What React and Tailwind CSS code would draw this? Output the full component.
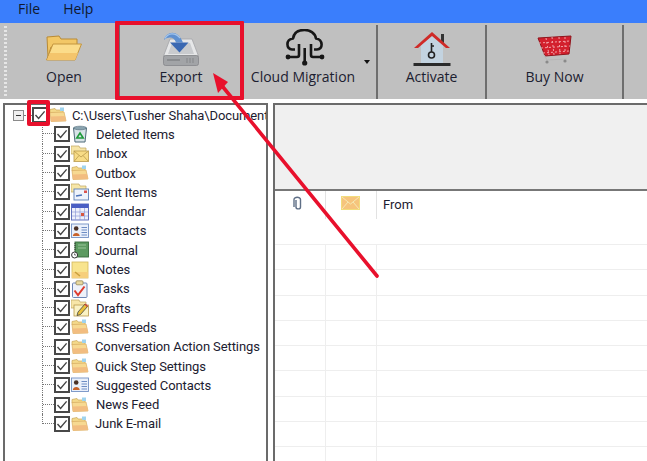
const F = { fontFamily: '"Open Sans", "Liberation Sans", sans-serif' };
const T = { fontFamily: 'Roboto, "Liberation Sans", sans-serif' };

function FolderBase() {
  return (
    <>
      <path d="M1 5 L1 3.5 L6 2.5 L7 4 L14 4 L14 7 L1 7 Z" fill="#f4d98a" stroke="#c9a85a" strokeWidth="0.7" />
      <path d="M11 1.5 L15 1.5 L15 5 L11 5 Z" fill="#9fd3ee" />
      <path d="M1 6.5 L15 6 L17 15 L2 15.5 Z" fill="#f7d991" stroke="#d9ae62" strokeWidth="0.7" />
      <path d="M1.5 10.5 L16 10 L17 15 L2 15.5 Z" fill="#f2bd80" />
    </>
  );
}

function Mini({ kind }) {
  return (
    <svg width="18" height="18" viewBox="0 0 18 18" className="shrink-0">
      {kind === "folder" && <FolderBase />}
      {kind === "trash" && (
        <>
          <path d="M2.5 3 L15.5 3 L14 17 L4 17 Z" fill="#d9e3e8" stroke="#4f6a78" strokeWidth="1" />
          <ellipse cx="9" cy="3" rx="6.5" ry="1.8" fill="#8aa4b0" stroke="#4f6a78" strokeWidth="0.6" />
          <path d="M9 8 L12.2 13 L5.8 13 Z" fill="none" stroke="#1f9a3a" strokeWidth="1.6" />
        </>
      )}
      {kind === "inbox" && (
        <>
          <path d="M0 1 L8 1 L9 3 L15 3 L15 9 L0 9 Z" fill="#f7e6a8" stroke="#bda35e" strokeWidth="0.7" />
          <rect x="3" y="6" width="14.5" height="10.5" fill="#f8dc86" stroke="#b99a4c" strokeWidth="0.8" />
          <path d="M3 6 L10 12 L17.5 6 M3 16.5 L8 10.5 M17.5 16.5 L12 10.5" fill="none" stroke="#b99a4c" strokeWidth="0.8" />
        </>
      )}
      {kind === "sent" && (
        <>
          <path d="M0 1 L8 1 L9 3 L15 3 L15 9 L0 9 Z" fill="#f7e6a8" stroke="#bda35e" strokeWidth="0.7" />
          <rect x="3" y="6" width="14.5" height="11" fill="#eef3fb" stroke="#5c7fb5" strokeWidth="0.9" />
          <path d="M5 13 L11 12" stroke="#4a72b8" strokeWidth="1.4" />
          <rect x="13" y="7.5" width="3" height="2.5" fill="#d9534f" />
        </>
      )}
      {kind === "calendar" && (
        <>
          <rect x="0.5" y="1" width="17" height="16" fill="#eef0fb" stroke="#5363b8" strokeWidth="0.9" />
          <rect x="0.5" y="1" width="17" height="4" fill="#4a5ec4" />
          <path d="M4.5 5 V17 M9 5 V17 M13.5 5 V17 M1 9 H17 M1 13 H17" stroke="#8f9bd8" strokeWidth="0.7" />
          <rect x="10" y="10" width="3" height="3" fill="#d8553f" />
        </>
      )}
      {kind === "contacts" && (
        <>
          <rect x="0.5" y="2" width="17" height="13.5" fill="#eaf0fb" stroke="#7390c4" strokeWidth="0.9" />
          <circle cx="5.2" cy="6.5" r="2.3" fill="#4b3228" />
          <path d="M1.8 14 C2 10 8.5 10 8.7 14 Z" fill="#c8622b" />
          <path d="M10.5 5.5 H16 M10.5 8 H16 M10.5 10.5 H16 M10.5 13 H16" stroke="#6d8cc4" strokeWidth="1" />
        </>
      )}
      {kind === "journal" && (
        <>
          <rect x="4" y="1" width="13.5" height="15" fill="#5c9a60" stroke="#35693a" strokeWidth="0.9" />
          <path d="M7 4 H15 M7 7 H15" stroke="#a9d0a8" strokeWidth="0.8" />
          <circle cx="3.6" cy="14" r="3" fill="#fff" stroke="#333" strokeWidth="1" />
          <path d="M3.6 12.5 V14 H5" stroke="#333" strokeWidth="0.7" fill="none" />
          <path d="M4 2 V10" stroke="#333" strokeWidth="1" strokeDasharray="1 1" />
        </>
      )}
      {kind === "notes" && (
        <>
          <rect x="1" y="1" width="16" height="16" fill="#f8e48e" stroke="#d2b75c" strokeWidth="0.8" />
          <path d="M1 11 L17 11 L17 17 L1 17 Z" fill="#f6cf7c" />
          <path d="M4 11 L9 15" stroke="#c9a03c" strokeWidth="1.6" />
        </>
      )}
      {kind === "tasks" && (
        <>
          <rect x="1.5" y="3" width="14.5" height="14.5" rx="1" fill="#eef2fa" stroke="#6d87b6" strokeWidth="1" />
          <rect x="5" y="0.8" width="7" height="4" rx="1" fill="#e8d9a0" stroke="#8d7d4a" strokeWidth="0.7" />
          <path d="M3.5 10.5 L7 15 L13.5 6.5" fill="none" stroke="#de3b2e" strokeWidth="2" />
        </>
      )}
      {kind === "drafts" && (
        <>
          <path d="M0 1 L8 1 L9 3 L15 3 L15 9 L0 9 Z" fill="#f7e6a8" stroke="#bda35e" strokeWidth="0.7" />
          <rect x="3" y="6" width="14.5" height="11" fill="#faf2c4" stroke="#b99a4c" strokeWidth="0.8" />
          <path d="M6 16.5 L7 13 L14 5 L16.5 7.5 L9.5 15.5 Z" fill="#e9c13c" stroke="#444" strokeWidth="0.8" />
          <path d="M14 5 L16.5 7.5" stroke="#c8413a" strokeWidth="1.6" />
        </>
      )}
    </svg>
  );
}

function Check() {
  return (
    <span className="flex h-[16px] w-[16px] shrink-0 items-center justify-center border-2 border-[#484848] bg-white">
      <svg width="12" height="12" viewBox="0 0 12 12">
        <path d="M1.5 6 L4.6 9.4 L10.6 2.4" fill="none" stroke="#444" strokeWidth="1.4" />
      </svg>
    </span>
  );
}

const items = [
  ["Deleted Items", "trash", 7],
  ["Inbox", "inbox", 7],
  ["Outbox", "folder", 6],
  ["Sent Items", "sent", 7],
  ["Calendar", "calendar", 6],
  ["Contacts", "contacts", 6],
  ["Journal", "journal", 6],
  ["Notes", "notes", 7],
  ["Tasks", "tasks", 7],
  ["Drafts", "drafts", 7],
  ["RSS Feeds", "folder", 7],
  ["Conversation Action Settings", "folder", 6],
  ["Quick Step Settings", "folder", 6],
  ["Suggested Contacts", "contacts", 7],
  ["News Feed", "folder", 7],
  ["Junk E-mail", "folder", 6],
];

function Sep() {
  return <div className="mt-[2px] w-[2px] shrink-0 bg-[#6e6e6e]" />;
}

function Tool({ w, label, children, caret }) {
  return (
    <div className={`relative flex h-full shrink-0 flex-col items-center ${w}`}>
      <div className="flex h-[44px] items-end justify-center">{children}</div>
      <span className={`text-[14px] leading-[20px] text-[#1c2030] ${caret ? "-ml-[14px]" : ""}`}>{label}</span>
      {caret && <span className="absolute right-[6px] top-[37px] h-0 w-0 border-x-[3px] border-t-[4px] border-x-transparent border-t-[#111]" />}
    </div>
  );
}

const rowLines = [0, 1, 2, 3, 4, 5, 6, 7, 8];

export default function App() {
  return (
    <div className="relative h-[461px] w-[647px] overflow-hidden bg-white" style={F}>
      <div className="flex h-[23px] items-start gap-[23px] bg-[#3a7efc] pl-[18px] text-[14px] leading-[17px] text-[#10192e]">
        <span>File</span>
        <span>Help</span>
      </div>

      <div className="flex h-[76px] bg-[#c0c0c0]">
        <div className="flex w-[10px] shrink-0 flex-col gap-[2px] pl-[4px] pt-[3px]">
          {Array.from({ length: 18 }, (_, i) => (
            <span key={i} className="h-[2px] w-[3px] bg-[#e6e6e6]" />
          ))}
        </div>
        <Tool w="w-[108px]" label="Open">
          <svg width="38" height="30" viewBox="0 0 38 30" className="mb-[4px]">
            <path d="M3 24 L2 4 L14 3 L16 6 L32 6 L32 12 L6 14 Z" fill="#f2c766" stroke="#b98a34" />
            <path d="M1.5 27 L8 11 L36.5 11 L30 27 Z" fill="#fbdc8a" stroke="#c4953e" />
            <path d="M2 27 L30 27 L33 20 L5 20 Z" fill="#f4c56c" />
          </svg>
        </Tool>
        <Sep />
        <Tool w="w-[122px]" label="Export">
          <svg width="36" height="36" viewBox="0 0 36 36" className="mb-[1px]">
            <path d="M7 9 L29 9 L35.5 26 L0.5 26 Z" fill="#e6e7e8" stroke="#a3a5a8" strokeWidth="0.8" />
            <path d="M9 13 L27 13 L31 24 L5 24 Z" fill="#c9cbce" />
            <rect x="0.5" y="25.5" width="35" height="10" rx="2" fill="#a2a4a7" stroke="#85878a" strokeWidth="0.8" />
            <path d="M4 30 H17" stroke="#85878a" strokeWidth="1.6" />
            <path d="M24 28 V33 M27 28 V33 M30 28 V33" stroke="#85878a" strokeWidth="1" />
            <path d="M1 10 C3 2 14 -2 20 12.5 L13 12.5 C11 7 6 6 1 10 Z" fill="#5f90d0" />
            <path d="M7 12.5 L25.5 12.5 L16.5 22.5 Z" fill="#3a68b2" />
            <path d="M2 8.5 C5 3 12 2 17 8" fill="none" stroke="#a5c6ec" strokeWidth="1.2" />
          </svg>
        </Tool>
        <Sep />
        <Tool w="w-[132px]" label="Cloud Migration" caret>
          <svg width="40" height="37" viewBox="0 0 40 37" fill="none" stroke="#161616" strokeWidth="2.6" className="mb-[1px] -ml-[11px]">
            <path d="M10 20.5 H7 C1 20.5 0.5 10 8 9.5 C9 3 14 1 19.5 1 C25 1 30 4 31 9.5 C38 10 38.5 20.5 32 20.5 H29" strokeLinejoin="round" />
            <path d="M14 15 V26 Q14 28 12 28 H3" />
            <path d="M26 15 V26 Q26 28 28 28 H37" />
            <path d="M19.7 19 V33" />
            <circle cx="3" cy="28" r="2.4" fill="#161616" stroke="none" />
            <circle cx="37" cy="28" r="2.4" fill="#161616" stroke="none" />
            <circle cx="19.7" cy="34" r="2.6" fill="#161616" stroke="none" />
          </svg>
        </Tool>
        <Sep />
        <Tool w="w-[107px]" label="Activate">
          <svg width="38" height="36" viewBox="0 0 38 36">
            <path d="M8 14 L19 4 L30 14 L30 32 L8 32 Z" fill="#c3d3e0" />
            <rect x="28" y="3" width="3" height="9" fill="#333" />
            <path d="M1 17 L19 1 L37 17 L33 17 L19 5 L5 17 Z" fill="#cf2a27" />
            <rect x="0.5" y="32" width="37" height="3" fill="#2a2a2a" />
            <circle cx="18.5" cy="24" r="3" fill="none" stroke="#222" strokeWidth="1.6" />
            <path d="M18.5 21 V12 M18.5 15 H21" stroke="#222" strokeWidth="1.6" />
          </svg>
        </Tool>
        <Sep />
        <Tool w="w-[135px]" label="Buy Now">
          <svg width="36" height="32" viewBox="0 0 36 32" className="mb-[2px]">
            <path d="M1 5 L34 3 L32 21 L8 23 Z" fill="#d3202d" stroke="#8f141c" />
            <path d="M2 10 L33 8 M4 15 L33 13 M6 20 L32 18 M9 5 L12 22 M15 4 L17 22 M22 4 L23 21 M28 4 L28 20" stroke="#f2a3a8" strokeWidth="1" strokeDasharray="2 2" />
            <path d="M7 22 L10 27 L30 26" fill="none" stroke="#b6b6b6" strokeWidth="1.2" />
            <circle cx="10" cy="29" r="1.6" fill="#8a8a8a" />
            <circle cx="28" cy="28" r="1.6" fill="#8a8a8a" />
          </svg>
        </Tool>
        <Sep />
      </div>

      <div className="flex h-[362px] pl-[3px] pt-[4px]">
        <div className="h-full w-[265px] shrink-0 overflow-hidden border-x-2 border-t-2 border-[#6b6b6b] bg-white pl-[8px] pt-[0.5px] text-[13px] tracking-[-0.1px] text-[#1c2030]" style={T}>
          <div className="flex h-[19.3px] items-center">
            <span className="flex h-[11px] w-[11px] shrink-0 items-center justify-center border border-[#8a8a8a] bg-[#f0f0f0]">
              <span className="h-[1px] w-[5px] bg-[#333]" />
            </span>
            <span className="w-[8px] shrink-0 border-b border-dotted border-[#777]" />
            <Check />
            <span className="ml-[1px]"><Mini kind="folder" /></span>
            <span className="ml-[5px] whitespace-nowrap leading-none">C:\Users\Tusher Shaha\Documents</span>
          </div>
          <div className="ml-[29px]">
            {items.map(([label, kind, ml], i) => (
              <div key={label} className="flex h-[19.3px] items-center">
                <div className={`h-full w-[12px] shrink-0 ${i === items.length - 1 ? "" : "border-l border-dotted border-[#777]"}`}>
                  <div className={`h-1/2 border-b border-dotted border-[#777] ${i === items.length - 1 ? "border-l" : ""}`} />
                </div>
                <Check />
                <span className="ml-[1px]"><Mini kind={kind} /></span>
                <span className={`whitespace-nowrap leading-none ${ml === 7 ? "ml-[7px]" : "ml-[6px]"}`}>{label}</span>
              </div>
            ))}
          </div>
        </div>

        <div className="ml-[5px] flex h-full min-w-0 flex-1 flex-col border-l-2 border-t-2 border-[#6b6b6b] bg-white">
          <div className="h-[86px] shrink-0 border-b-2 border-[#777] bg-[#f0f0f0]" />
          <div className="flex h-[54px] shrink-0 border-b border-[#eeeeee]">
            <div className="flex h-[28px] w-[51px] shrink-0 justify-center border-r border-[#e2e2e2] pr-[4px] pt-[5px]">
              <svg width="10" height="15" viewBox="0 0 10 15" fill="none" stroke="#5f6f86" strokeWidth="1.4">
                <path d="M3 4 V11 C3 13.5 7.5 13.5 7.5 11 V3.5 C7.5 0.5 1 0.5 1 3.5 V11" />
              </svg>
            </div>
            <div className="flex h-[28px] w-[51px] shrink-0 justify-center border-r border-[#e2e2e2] pr-[1px] pt-[5px]">
              <svg width="19" height="14" viewBox="0 0 19 14">
                <rect x="0.5" y="0.5" width="18" height="13" fill="#f6c47c" stroke="#f2dc7c" />
                <path d="M1 1 L9.5 8 L18 1 M1 13 L7 6 M18 13 L12 6" fill="none" stroke="#f7e9b2" strokeWidth="1" />
              </svg>
            </div>
            <span className="pl-[6px] pt-[4px] text-[13px] leading-[20px] text-[#1c2030]" style={T}>From</span>
          </div>
          {rowLines.map((r) => (
            <div key={r} className="flex h-[25.3px] shrink-0 border-b border-[#eeeeee]">
              <div className="w-[51px] shrink-0 border-r border-[#eeeeee]" />
              <div className="w-[51px] shrink-0 border-r border-[#eeeeee]" />
            </div>
          ))}
        </div>
      </div>

      <div className="pointer-events-none absolute left-[115px] top-[21px] h-[79px] w-[129px] rounded-[1px] border-[4px] border-[#e8102c]" />
      <div className="pointer-events-none absolute left-[27px] top-[100px] h-[26px] w-[23px] rounded-[2px] border-[4px] border-[#e8102c]" />
      <svg className="pointer-events-none absolute left-0 top-0" width="647" height="461">
        <path d="M377 276 L223 87" stroke="#e8102c" strokeWidth="3.6" strokeLinecap="round" />
        <path d="M213 73 L228 82 L218 93 Z" fill="#e8102c" />
      </svg>
    </div>
  );
}
